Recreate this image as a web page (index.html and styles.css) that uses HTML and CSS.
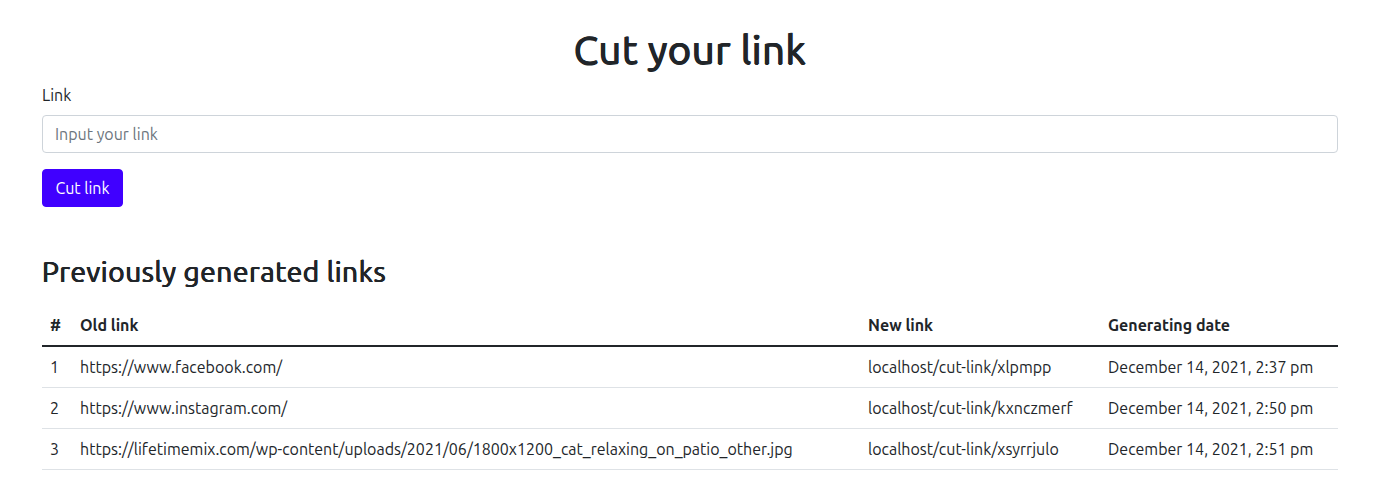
FILE: index.html
```html
<!DOCTYPE html>
<html lang="en">
<head>
<meta charset="utf-8">
<title>Cut your link</title>
<link rel="stylesheet" href="styles.css">
</head>
<body>
<main class="container">
  <h1 class="title">Cut your link</h1>
  <form class="cut-form">
    <label class="form-label" for="link">Link</label>
    <input class="form-control" id="link" type="text" placeholder="Input your link">
    <button class="btn" type="button">Cut link</button>
  </form>
  <h2 class="subtitle">Previously generated links</h2>
  <table class="table">
    <colgroup>
      <col class="c-num"><col class="c-old"><col class="c-new"><col class="c-date">
    </colgroup>
    <thead>
      <tr><th>#</th><th>Old link</th><th>New link</th><th>Generating date</th></tr>
    </thead>
    <tbody>
      <tr><td>1</td><td>https://www.facebook.com/</td><td>localhost/cut-link/xlpmpp</td><td>December 14, 2021, 2:37 pm</td></tr>
      <tr><td>2</td><td>https://www.instagram.com/</td><td>localhost/cut-link/kxnczmerf</td><td>December 14, 2021, 2:50 pm</td></tr>
      <tr><td>3</td><td>https://lifetimemix.com/wp-content/uploads/2021/06/1800x1200_cat_relaxing_on_patio_other.jpg</td><td>localhost/cut-link/xsyrrjulo</td><td>December 14, 2021, 2:51 pm</td></tr>
    </tbody>
  </table>
</main>
</body>
</html>
```

FILE: styles.css
```css
* { box-sizing: border-box; }
html, body { margin: 0; padding: 0; background: #fff; }
body {
  font-family: "Ubuntu", "Open Sans", "Noto Sans", sans-serif;
  font-size: 16px;
  line-height: 1.5;
  color: #212529;
}
.container {
  padding: 26px 45px 0 42px;
}
.title {
  margin: 0 0 9px;
  font-size: 40px;
  font-weight: 400;
  line-height: 1.2;
  letter-spacing: 0.6px;
  text-shadow: 0.7px 0 0 #212529, -0.7px 0 0 #212529, 0 0.5px 0 #212529;
  text-align: center;
}
.cut-form {
  display: flex;
  flex-direction: column;
  align-items: flex-start;
}
.form-label {
  display: block;
  margin-bottom: 8px;
}
.form-control {
  width: 100%;
  height: 38px;
  padding: 6px 12px;
  font: inherit;
  color: #212529;
  border: 1px solid #ced4da;
  border-radius: 4px;
  outline: none;
}
.form-control::placeholder { color: #6c757d; }
.btn {
  margin-top: 16px;
  height: 38px;
  padding: 6px 12.5px;
  font: inherit;
  color: #fff;
  background: #4000ff;
  border: 1px solid #4000ff;
  border-radius: 4px;
}
.subtitle {
  margin: 48px 0 16px;
  font-size: 28px;
  font-weight: 400;
  line-height: 1.2;
  letter-spacing: 0.6px;
  text-shadow: 0.5px 0 0 #212529, -0.5px 0 0 #212529, 0 0.4px 0 #212529;
}
.table {
  width: 100%;
  border-collapse: collapse;
  table-layout: fixed;
}
.c-num { width: 30px; }
.c-new { width: 240px; }
.c-date { width: 238px; }
.table th, .table td {
  padding: 8px;
  text-align: left;
  white-space: nowrap;
  border-bottom: 1px solid #dee2e6;
}
.table th {
  font-weight: 700;
  border-bottom: 2px solid #212529;
}
```
